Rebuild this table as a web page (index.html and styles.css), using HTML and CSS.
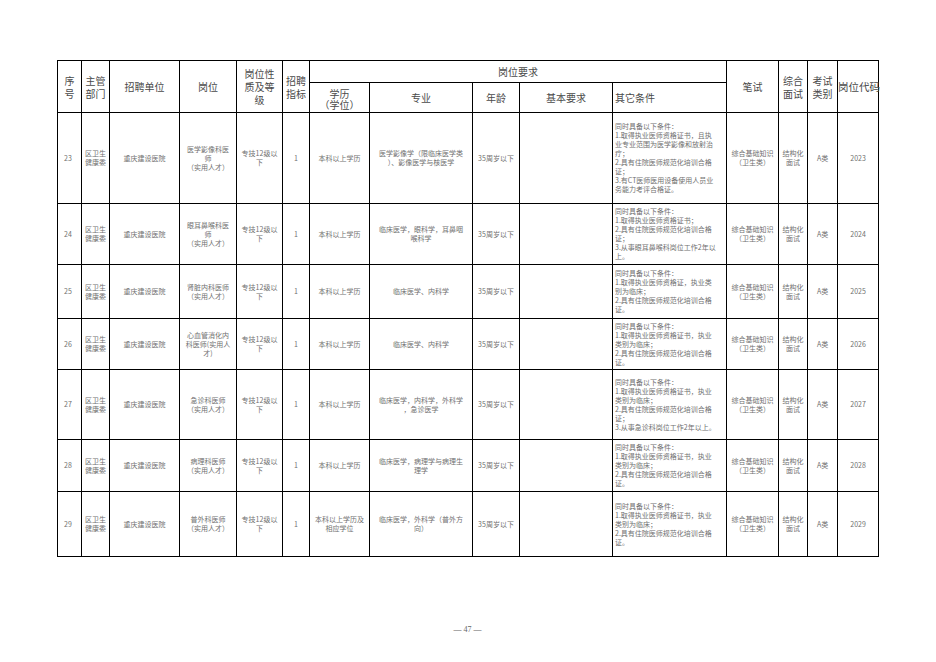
FILE: index.html
```html
<!DOCTYPE html>
<html lang="zh-CN">
<head>
<meta charset="utf-8">
<title>岗位表</title>
<link rel="stylesheet" href="styles.css">
</head>
<body>
<div class="page">
  <table class="grid">
    <colgroup>
      <col class="c-no"><col class="c-dept"><col class="c-unit"><col class="c-post"><col class="c-grade"><col class="c-num">
      <col class="c-edu"><col class="c-major"><col class="c-age"><col class="c-basic"><col class="c-other">
      <col class="c-written"><col class="c-inter"><col class="c-type"><col class="c-code">
    </colgroup>
    <thead>
      <tr class="h1">
        <th rowspan="2">序<br>号</th>
        <th rowspan="2">主管<br>部门</th>
        <th rowspan="2">招聘单位</th>
        <th rowspan="2">岗位</th>
        <th rowspan="2">岗位性<br>质及等<br>级</th>
        <th rowspan="2">招聘<br>指标</th>
        <th colspan="5">岗位要求</th>
        <th rowspan="2">笔试</th>
        <th rowspan="2">综合<br>面试</th>
        <th rowspan="2">考试<br>类别</th>
        <th rowspan="2" class="code-h">岗位代码</th>
      </tr>
      <tr class="h2">
        <th class="edu-h">学历<br>（学位）</th>
        <th>专业</th>
        <th>年龄</th>
        <th>基本要求</th>
        <th class="left">其它条件</th>
      </tr>
    </thead>
    <tbody>
      <tr class="r23">
        <td class="no">23</td>
        <td>区卫生<br>健康委</td>
        <td>重庆建设医院</td>
        <td>医学影像科医<br>师<br>（实用人才）</td>
        <td>专技12级以<br>下</td>
        <td>1</td>
        <td>本科以上学历</td>
        <td>医学影像学（限临床医学类<br>）、影像医学与核医学</td>
        <td>35周岁以下</td>
        <td></td>
        <td class="left">同时具备以下条件：<br>1.取得执业医师资格证书，且执<br>业专业范围为医学影像和放射治<br>疗；<br>2.具有住院医师规范化培训合格<br>证；<br>3.有CT医师医用设备使用人员业<br>务能力考评合格证。</td>
        <td>综合基础知识<br>（卫生类）</td>
        <td>结构化<br>面试</td>
        <td>A类</td>
        <td>2023</td>
      </tr>
      <tr class="r24">
        <td class="no">24</td>
        <td>区卫生<br>健康委</td>
        <td>重庆建设医院</td>
        <td>眼耳鼻喉科医<br>师<br>（实用人才）</td>
        <td>专技12级以<br>下</td>
        <td>1</td>
        <td>本科以上学历</td>
        <td>临床医学，眼科学，耳鼻咽<br>喉科学</td>
        <td>35周岁以下</td>
        <td></td>
        <td class="left">同时具备以下条件：<br>1.取得执业医师资格证书；<br>2.具有住院医师规范化培训合格<br>证；<br>3.从事眼耳鼻喉科岗位工作2年以<br>上。</td>
        <td>综合基础知识<br>（卫生类）</td>
        <td>结构化<br>面试</td>
        <td>A类</td>
        <td>2024</td>
      </tr>
      <tr class="r25">
        <td class="no">25</td>
        <td>区卫生<br>健康委</td>
        <td>重庆建设医院</td>
        <td>肾脏内科医师<br>（实用人才）</td>
        <td>专技12级以<br>下</td>
        <td>1</td>
        <td>本科以上学历</td>
        <td>临床医学、内科学</td>
        <td>35周岁以下</td>
        <td></td>
        <td class="left">同时具备以下条件：<br>1.取得执业医师资格证，执业类<br>别为临床；<br>2.具有住院医师规范化培训合格<br>证。</td>
        <td>综合基础知识<br>（卫生类）</td>
        <td>结构化<br>面试</td>
        <td>A类</td>
        <td>2025</td>
      </tr>
      <tr class="r26">
        <td class="no">26</td>
        <td>区卫生<br>健康委</td>
        <td>重庆建设医院</td>
        <td>心血管消化内<br>科医师(实用人<br>才)</td>
        <td>专技12级以<br>下</td>
        <td>1</td>
        <td>本科以上学历</td>
        <td>临床医学、内科学</td>
        <td>35周岁以下</td>
        <td></td>
        <td class="left">同时具备以下条件：<br>1.取得执业医师资格证书，执业<br>类别为临床；<br>2.具有住院医师规范化培训合格<br>证。</td>
        <td>综合基础知识<br>（卫生类）</td>
        <td>结构化<br>面试</td>
        <td>A类</td>
        <td>2026</td>
      </tr>
      <tr class="r27">
        <td class="no">27</td>
        <td>区卫生<br>健康委</td>
        <td>重庆建设医院</td>
        <td>急诊科医师<br>（实用人才）</td>
        <td>专技12级以<br>下</td>
        <td>1</td>
        <td>本科以上学历</td>
        <td>临床医学，内科学，外科学<br>，急诊医学</td>
        <td>35周岁以下</td>
        <td></td>
        <td class="left">同时具备以下条件：<br>1.取得执业医师资格证书，执业<br>类别为临床；<br>2.具有住院医师规范化培训合格<br>证；<br>3.从事急诊科岗位工作2年以上。</td>
        <td>综合基础知识<br>（卫生类）</td>
        <td>结构化<br>面试</td>
        <td>A类</td>
        <td>2027</td>
      </tr>
      <tr class="r28">
        <td class="no">28</td>
        <td>区卫生<br>健康委</td>
        <td>重庆建设医院</td>
        <td>病理科医师<br>（实用人才）</td>
        <td>专技12级以<br>下</td>
        <td>1</td>
        <td>本科以上学历</td>
        <td>临床医学，病理学与病理生<br>理学</td>
        <td>35周岁以下</td>
        <td></td>
        <td class="left">同时具备以下条件：<br>1.取得执业医师资格证书，执业<br>类别为临床；<br>2.具有住院医师规范化培训合格<br>证。</td>
        <td>综合基础知识<br>（卫生类）</td>
        <td>结构化<br>面试</td>
        <td>A类</td>
        <td>2028</td>
      </tr>
      <tr class="r29">
        <td class="no">29</td>
        <td>区卫生<br>健康委</td>
        <td>重庆建设医院</td>
        <td>普外科医师<br>（实用人才）</td>
        <td>专技12级以<br>下</td>
        <td>1</td>
        <td>本科以上学历及<br>相应学位</td>
        <td>临床医学，外科学（普外方<br>向）</td>
        <td>35周岁以下</td>
        <td></td>
        <td class="left">同时具备以下条件：<br>1.取得执业医师资格证书，执业<br>类别为临床；<br>2.具有住院医师规范化培训合格<br>证。</td>
        <td>综合基础知识<br>（卫生类）</td>
        <td>结构化<br>面试</td>
        <td>A类</td>
        <td>2029</td>
      </tr>
    </tbody>
  </table>
  <div class="folio">—&nbsp;47&nbsp;—</div>
</div>
</body>
</html>
```
FILE: styles.css
```css
html, body {
  margin: 0;
  padding: 0;
  background: #ffffff;
}

body {
  font-family: "Noto Sans CJK SC", "Liberation Serif", sans-serif;
  color: #444;
}

.page {
  padding: 60px 0 0 57px;
  width: 821px;
}

.grid {
  border-collapse: collapse;
  table-layout: fixed;
  width: 821px;
}

.grid th,
.grid td {
  border: 1px solid #000;
  padding: 0 1px;
  text-align: center;
  vertical-align: middle;
  overflow: visible;
}

.grid th {
  font-weight: normal;
  font-size: 10px;
  line-height: 13px;
  color: #4a4a4a;
}

.grid td {
  font-size: 7px;
  line-height: 9px;
  color: #707070;
  white-space: nowrap;
}

.grid .left {
  text-align: left;
  padding-left: 2px;
}

.grid .no {
  padding-right: 4px;
}

.grid .code-h {
  text-align: left;
  padding: 0;
  white-space: nowrap;
  font-size: 10.5px;
}

.grid .edu-h {
  line-height: 11px;
  padding-top: 2px;
}

.c-no { width: 24px; }
.c-dept { width: 28px; }
.c-unit { width: 70px; }
.c-post { width: 57px; }
.c-grade { width: 46px; }
.c-num { width: 27px; }
.c-edu { width: 60px; }
.c-major { width: 103px; }
.c-age { width: 47px; }
.c-basic { width: 93px; }
.c-other { width: 114px; }
.c-written { width: 52px; }
.c-inter { width: 29px; }
.c-type { width: 30px; }
.c-code { width: 41px; }

.h1 { height: 22px; }
.h2 { height: 30px; }
.r23 { height: 91px; }
.r24 { height: 61px; }
.r25 { height: 54px; }
.r26 { height: 51px; }
.r27 { height: 70px; }
.r28 { height: 52px; }
.r29 { height: 65px; }

.folio {
  margin-top: 68px;
  text-align: center;
  font-family: "Liberation Serif", serif;
  font-size: 8px;
  line-height: 9px;
  color: #666;
}
```
